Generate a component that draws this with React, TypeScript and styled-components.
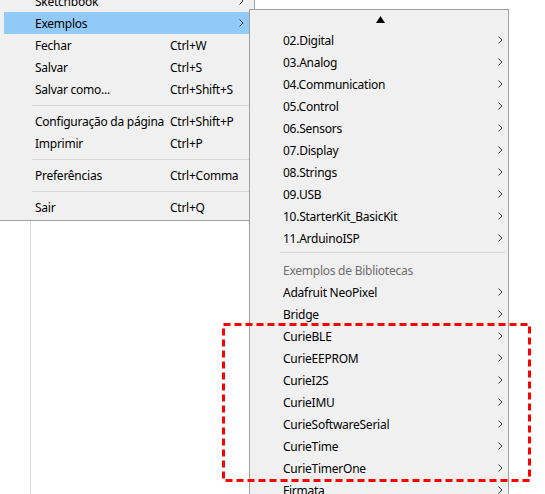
import React from 'react';
import styled, { createGlobalStyle } from 'styled-components';

const GlobalStyle = createGlobalStyle`
  html, body {
    margin: 0;
    padding: 0;
    background: #ffffff;
  }
  body {
    font-family: 'Noto Sans', 'Liberation Sans', sans-serif;
    font-size: 12px;
    letter-spacing: -0.25px;
    color: #000;
  }
`;

const Page = styled.div`
  position: relative;
  width: 545px;
  height: 494px;
  overflow: hidden;
  background: #ffffff;
  display: flex;
`;

const Gutter = styled.div`
  width: 30px;
  height: 100%;
  border-right: 1px solid #dcdcdc;
`;

const Editor = styled.div`
  flex: 1;
  background: #ffffff;
`;

const MainMenu = styled.div`
  position: absolute;
  left: 0;
  top: -10px;
  width: 254px;
  background: #f0f0f0;
  border-right: 1px solid #a0a0a0;
  border-bottom: 1px solid #a0a0a0;
  padding-bottom: 2px;
`;

const Row = styled.div<{ $active?: boolean }>`
  height: 22px;
  margin: 0 1px 0 4px;
  padding-left: 31px;
  display: flex;
  align-items: center;
  background: ${(p) => (p.$active ? '#91c9f7' : 'transparent')};
  white-space: nowrap;
`;

const Label = styled.span`
  width: 135px;
`;

const Shortcut = styled.span`
  flex: 1;
`;

const Chevron = styled.span`
  width: 14px;
  display: flex;
  align-items: center;
  justify-content: flex-start;
`;

const Separator = styled.div<{ $inset: number; $offset: number }>`
  height: 10px;
  box-sizing: border-box;
  padding-top: ${(p) => p.$offset}px;
  margin-left: ${(p) => p.$inset}px;
  margin-right: 3px;
  &::after {
    content: '';
    display: block;
    height: 1px;
    background: #d7d7d7;
  }
`;

const SubMenu = styled.div`
  position: absolute;
  left: 249px;
  top: 9px;
  width: 258px;
  background: #f0f0f0;
  border: 1px solid #a0a0a0;
  border-bottom: none;
`;

const ScrollUp = styled.div`
  height: 19px;
  display: flex;
  align-items: center;
  justify-content: center;
  padding-left: 2px;
`;

const SubRow = styled.div<{ $muted?: boolean }>`
  height: 22px;
  padding-left: 33px;
  display: flex;
  align-items: center;
  color: ${(p) => (p.$muted ? '#6d6d6d' : '#000')};
  white-space: nowrap;
`;

const SubLabel = styled.span`
  flex: 1;
`;

const SubChevron = styled.span`
  width: 10px;
  display: flex;
  align-items: center;
`;

const Highlight = styled.svg`
  position: absolute;
  left: 222px;
  top: 323px;
  overflow: visible;
`;

const Arrow = () => (
  <svg width="5" height="8" viewBox="0 0 5 8">
    <polyline points="0.5,0.5 4,4 0.5,7.5" fill="none" stroke="#333" strokeWidth="1" />
  </svg>
);

type MenuItem =
  | { kind: 'item'; label: string; shortcut?: string; sub?: boolean; active?: boolean }
  | { kind: 'sep' };

const mainItems: MenuItem[] = [
  { kind: 'item', label: 'Sketchbook', sub: true },
  { kind: 'item', label: 'Exemplos', sub: true, active: true },
  { kind: 'item', label: 'Fechar', shortcut: 'Ctrl+W' },
  { kind: 'item', label: 'Salvar', shortcut: 'Ctrl+S' },
  { kind: 'item', label: 'Salvar como...', shortcut: 'Ctrl+Shift+S' },
  { kind: 'sep' },
  { kind: 'item', label: 'Configuração da página', shortcut: 'Ctrl+Shift+P' },
  { kind: 'item', label: 'Imprimir', shortcut: 'Ctrl+P' },
  { kind: 'sep' },
  { kind: 'item', label: 'Preferências', shortcut: 'Ctrl+Comma' },
  { kind: 'sep' },
  { kind: 'item', label: 'Sair', shortcut: 'Ctrl+Q' },
];

const builtIn = [
  '02.Digital',
  '03.Analog',
  '04.Communication',
  '05.Control',
  '06.Sensors',
  '07.Display',
  '08.Strings',
  '09.USB',
  '10.StarterKit_BasicKit',
  '11.ArduinoISP',
];

const libraries = [
  'Adafruit NeoPixel',
  'Bridge',
  'CurieBLE',
  'CurieEEPROM',
  'CurieI2S',
  'CurieIMU',
  'CurieSoftwareSerial',
  'CurieTime',
  'CurieTimerOne',
  'Firmata',
];

function App() {
  return (
    <>
      <GlobalStyle />
      <Page>
        <Gutter />
        <Editor />

        <MainMenu>
          {mainItems.map((item, i) =>
            item.kind === 'sep' ? (
              <Separator key={i} $inset={32} $offset={5} />
            ) : (
              <Row key={i} $active={item.active}>
                <Label>{item.label}</Label>
                <Shortcut>{item.shortcut}</Shortcut>
                <Chevron>{item.sub && <Arrow />}</Chevron>
              </Row>
            )
          )}
        </MainMenu>

        <SubMenu>
          <ScrollUp>
            <svg width="9" height="7" viewBox="0 0 9 7">
              <polygon points="4.5,0 9,7 0,7" fill="#000" />
            </svg>
          </ScrollUp>
          {builtIn.map((name) => (
            <SubRow key={name}>
              <SubLabel>{name}</SubLabel>
              <SubChevron>
                <Arrow />
              </SubChevron>
            </SubRow>
          ))}
          <Separator $inset={30} $offset={3} />
          <SubRow $muted>
            <SubLabel>Exemplos de Bibliotecas</SubLabel>
          </SubRow>
          {libraries.map((name) => (
            <SubRow key={name}>
              <SubLabel>{name}</SubLabel>
              <SubChevron>
                <Arrow />
              </SubChevron>
            </SubRow>
          ))}
        </SubMenu>

        <Highlight width="309" height="159">
          <rect
            x="1.5"
            y="1.5"
            width="306"
            height="156"
            fill="none"
            stroke="#ff0000"
            strokeWidth="3"
            strokeDasharray="7 4"
          />
        </Highlight>
      </Page>
    </>
  );
}

export default App;
